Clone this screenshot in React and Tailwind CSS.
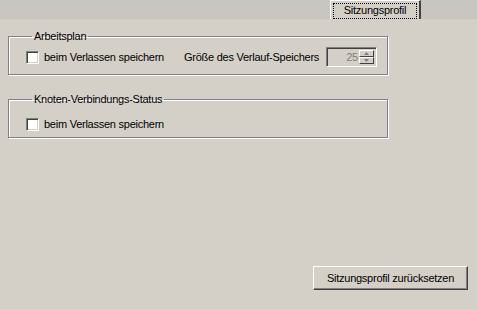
import React from "react";

const font = { fontFamily: '"Liberation Sans", Arial, sans-serif' };

const Checkbox = () => (
  <span className="inline-block shrink-0 w-[13px] h-[13px] bg-white border border-t-[#808080] border-l-[#808080] border-b-white border-r-white shadow-[inset_1px_1px_0_#404040,inset_-1px_-1px_0_#d4d0c8]" />
);

const CheckRow = ({ label }) => (
  <label className="flex w-[158px] shrink-0 items-center gap-[5px] text-[11px] text-black whitespace-nowrap">
    <Checkbox />
    <span>{label}</span>
  </label>
);

const Group = ({ title, children, className }) => (
  <fieldset
    className={`w-[380px] border border-[#808080] shadow-[inset_1px_1px_0_#fff,1px_1px_0_#fff] pl-[17px] pr-[8px] ${className}`}
  >
    <legend className="ml-[6px] px-[2px] text-[11px] leading-[13px] text-black whitespace-nowrap">{title}</legend>
    {children}
  </fieldset>
);

const Spinner = ({ value }) => (
  <div className="flex shrink-0 w-[51px] h-[20px] border border-t-[#808080] border-l-[#808080] border-b-white border-r-white shadow-[inset_1px_1px_0_#404040,inset_-1px_-1px_0_#d4d0c8] bg-[#d4d0c8] p-[2px]">
    <span className="flex-1 text-right text-[11px] leading-[14px] text-[#808080] pr-[1px]">{value}</span>
    <div className="flex flex-col w-[15px]">
      <span className="flex-1 flex items-center justify-center border border-t-white border-l-white border-b-[#404040] border-r-[#404040] bg-[#d4d0c8]">
        <svg width="5" height="3" viewBox="0 0 5 3"><path d="M2.5 0 L5 3 L0 3 Z" fill="#808080" /></svg>
      </span>
      <span className="flex-1 flex items-center justify-center border border-t-white border-l-white border-b-[#404040] border-r-[#404040] bg-[#d4d0c8]">
        <svg width="5" height="3" viewBox="0 0 5 3"><path d="M0 0 L5 0 L2.5 3 Z" fill="#808080" /></svg>
      </span>
    </div>
  </div>
);

export default function App() {
  return (
    <div className="w-[477px] h-[309px] bg-[#d4d0c8] flex flex-col overflow-hidden tracking-[-0.25px]" style={font}>
      <div className="h-[19px] bg-[#c8c6c1] flex justify-end pr-[56px]">
        <div className="w-[91px] h-[19px] bg-[#d4d0c8] border-l border-t border-white border-r-2 border-r-[#404040] flex items-center justify-center px-[2px] pt-[1px]">
          <span className="w-full h-[16px] border border-dotted border-black flex items-center justify-center text-[11px] text-black">
            Sitzungsprofil
          </span>
        </div>
      </div>

      <div className="flex flex-col px-[8px] pt-[11px]">
        <Group title="Arbeitsplan" className="h-[45px]">
          <div className="flex items-center pt-[4px]">
            <CheckRow label="beim Verlassen speichern" />
            <span className="w-[142px] shrink-0 text-[11px] text-black whitespace-nowrap">Größe des Verlauf-Speichers</span>
            <Spinner value="25" />
          </div>
        </Group>

        <Group title="Knoten-Verbindungs-Status" className="h-[45px] mt-[18px]">
          <div className="flex items-center pt-[10px]">
            <CheckRow label="beim Verlassen speichern" />
          </div>
        </Group>
      </div>

      <div className="flex-1" />
      <div className="flex justify-end pr-[9px] pb-[19px]">
        <button className="w-[155px] h-[24px] bg-[#d4d0c8] border border-t-white border-l-white border-b-[#404040] border-r-[#404040] shadow-[inset_-1px_-1px_0_#808080] text-[11px] text-black whitespace-nowrap">
          Sitzungsprofil zurücksetzen
        </button>
      </div>
    </div>
  );
}
